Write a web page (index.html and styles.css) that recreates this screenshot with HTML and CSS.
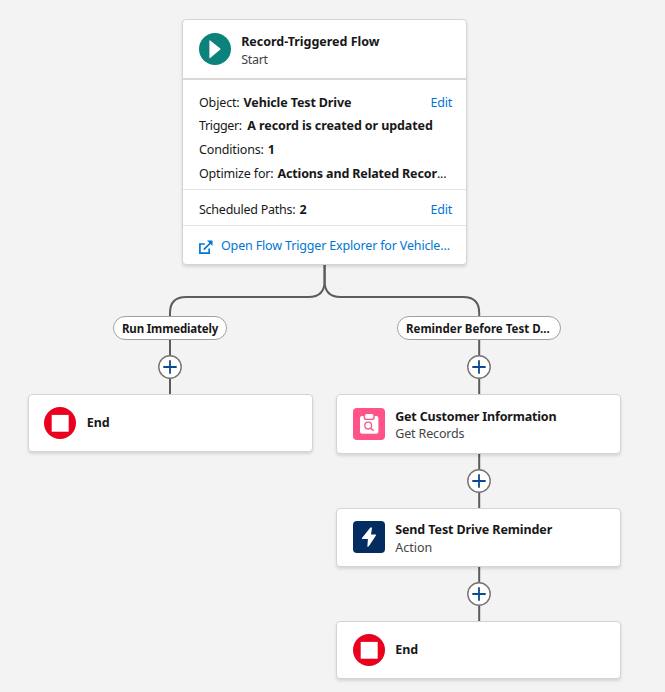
FILE: index.html
```html
<!DOCTYPE html>
<html lang="en">
<head>
<meta charset="utf-8">
<title>Flow Builder</title>
<link rel="stylesheet" href="styles.css">
</head>
<body>
<svg width="0" height="0" class="defs">
  <symbol id="plus" viewBox="0 0 24 24">
    <circle cx="12" cy="12" r="11.2" fill="#fff" stroke="#747474" stroke-width="1.4"/>
    <path d="M12 5.3v13.4M5.3 12h13.4" stroke="#0b4a8c" stroke-width="1.8"/>
  </symbol>
  <symbol id="stop" viewBox="0 0 32 32">
    <circle cx="16" cy="16" r="16" fill="#ea001e"/>
    <rect x="7.7" y="7.9" width="17" height="16.8" fill="#fff"/>
  </symbol>
</svg>
<main class="canvas">
  <svg class="connectors" width="665" height="692" viewBox="0 0 665 692">
    <path d="M324.6 264V281Q324.6 297 308.6 297H186Q170 297 170 313V395"/>
    <path d="M324.6 264V281Q324.6 297 340.6 297H463.2Q479.2 297 479.2 313V622"/>
  </svg>

  <section class="card start">
    <header class="head">
      <svg class="icon" viewBox="0 0 32 32"><circle cx="16" cy="16" r="16" fill="#0b827c"/><path d="M10.4 7.8Q10.4 6.9 11.2 7.5L21.3 15.5Q21.9 16 21.3 16.5L11.2 25Q10.4 25.6 10.4 24.8Z" fill="#fff"/></svg>
      <div class="label"><b class="t-flow">Record-Triggered Flow</b><span class="sub t-start">Start</span></div>
    </header>
    <div class="details">
      <div class="row"><span class="t-key">Object:</span><b class="t-vehicle">Vehicle Test Drive</b><a class="edit">Edit</a></div>
      <div class="row"><span class="t-trigger">Trigger:</span><b class="t-record">A record is created or updated</b></div>
      <div class="row"><span class="t-key">Conditions:</span><b>1</b></div>
      <div class="row"><span class="t-optimize">Optimize for:</span><b class="t-actions">Actions and Related Recor<span class="dots">...</span></b></div>
    </div>
    <div class="row paths"><span class="t-paths">Scheduled Paths:</span><b>2</b><a class="edit">Edit</a></div>
    <div class="explorer">
      <svg class="open" viewBox="0 0 14 14"><path d="M5.8 4H.9V13.2H10.2V8.6M4.8 9.6L11.4 3" fill="none" stroke="#0176d3" stroke-width="1.7"/><path d="M8 .6H13Q13.5 .6 13.5 1.1V6Z" fill="#0176d3"/></svg>
      <a class="t-open">Open Flow Trigger Explorer for Vehicle...</a>
    </div>
  </section>

  <div class="pill run"><b>Run Immediately</b></div>
  <div class="pill reminder"><b>Reminder Before Test D...</b></div>

  <svg class="add add-left"><use href="#plus"/></svg>
  <svg class="add add-first"><use href="#plus"/></svg>
  <svg class="add add-second"><use href="#plus"/></svg>
  <svg class="add add-third"><use href="#plus"/></svg>

  <section class="card node end end-left"><svg class="icon"><use href="#stop"/></svg><div class="label"><b>End</b></div></section>

  <section class="card node get">
    <svg class="icon" viewBox="0 0 32 32"><rect width="32" height="32" rx="4" fill="#ff538a"/><path d="M9 8H10.6V9.5Q10.6 12 13 12H19.4Q21.8 12 21.8 9.5V8H23.4Q25.4 8 25.4 10V23.8Q25.4 25.8 23.4 25.8H9Q7 25.8 7 23.8V10Q7 8 9 8Z" fill="#fff"/><rect x="12" y="6" width="8.4" height="4.7" rx="1.6" fill="#fff"/><circle cx="15.2" cy="17.6" r="3.4" fill="none" stroke="#ff538a" stroke-width="1.3"/><path d="M17.7 20.1L20.6 22.8" stroke="#ff538a" stroke-width="1.5"/></svg>
    <div class="label"><b class="t-get">Get Customer Information</b><span class="sub t-key">Get Records</span></div>
  </section>

  <section class="card node send">
    <svg class="icon" viewBox="0 0 32 32"><rect width="32" height="32" rx="4" fill="#032d60"/><path d="M17.2 6.8Q19 5.4 18.9 7.4L18 13.6H22.4Q23.5 13.6 22.9 14.6L16 25.1Q14.4 26.8 14.4 24.9L14.9 18H9.6Q8.4 18 9 17Z" fill="#fff"/></svg>
    <div class="label"><b class="t-send">Send Test Drive Reminder</b><span class="sub">Action</span></div>
  </section>

  <section class="card node end end-right"><svg class="icon"><use href="#stop"/></svg><div class="label"><b>End</b></div></section>
</main>
</body>
</html>
```

FILE: styles.css
```css
* { box-sizing: border-box; }
body {
  margin: 0;
  background: #f3f3f3;
  color: #181818;
  font: 12.5px/18px "Noto Sans", sans-serif;
}
.defs { position: absolute; }
.canvas { position: relative; width: 665px; height: 692px; overflow: hidden; }
.connectors { position: absolute; left: 0; top: 0; }
.connectors path { fill: none; stroke: #5c5c5c; stroke-width: 2; }

.card {
  position: absolute;
  width: 285px;
  background: #fff;
  border: 1px solid #d4d4d4;
  border-radius: 4px;
  box-shadow: 0 2px 3px rgba(0, 0, 0, .12);
  white-space: nowrap;
}
.icon { width: 32px; height: 32px; flex: none; }
.label { display: flex; flex-direction: column; margin-left: 10.5px; }
.sub { color: #444; }
a { color: #0176d3; }

.start { left: 182px; top: 19px; height: 246px; }
.head { display: flex; height: 60px; padding: 13px 0 0 15.7px; border-bottom: 2px solid #d8d8d8; }
.details { height: 110px; padding: 13.7px 14px 0 16px; border-bottom: 1px solid #e5e5e5; }
.row { display: flex; align-items: flex-start; gap: 4px; height: 23.7px; }
.edit { margin-left: auto; letter-spacing: -.2px; }
.paths { height: 36px; padding: 11px 14px 0 16px; border-bottom: 1px solid #e5e5e5; }
.explorer { display: flex; padding: 11px 0 0 16px; }
.open { width: 14px; height: 14px; margin: 3px 8px 0 0; }

.pill {
  position: absolute;
  top: 316px;
  height: 24px;
  border: 1px solid #a0a0a0;
  border-radius: 12px;
  background: #fff;
  font-size: 11.5px;
  line-height: 24px;
  padding-left: 8px;
  white-space: nowrap;
}
.run { left: 113px; width: 114px; letter-spacing: -.17px; }
.reminder { left: 397px; width: 164px; letter-spacing: 0; }

.add { position: absolute; width: 24px; height: 24px; }
.add-left { left: 158px; top: 355px; }
.add-first { left: 467px; top: 355px; }
.add-second { left: 467px; top: 468.7px; }
.add-third { left: 467px; top: 582px; }

.node { display: flex; padding: 13px 0 0 15.7px; }
.node .label { line-height: 17.5px; }
.end { padding-top: 12px; }
.end .label { padding-top: 6.5px; }
.end-left { left: 27.5px; top: 394px; height: 58px; }
.end-right { left: 336px; top: 621px; height: 58px; }
.get { left: 336px; top: 394px; height: 60px; }
.get .label { line-height: 17px; }
.send { left: 336px; top: 508px; height: 59px; padding-top: 12px; }

.t-flow { letter-spacing: -.02px; }
.t-start { letter-spacing: -.3px; }
.t-key { letter-spacing: -.15px; }
.t-vehicle { letter-spacing: -.12px; }
.t-trigger { letter-spacing: -.35px; margin-right: 1.5px; }
.t-record { letter-spacing: -.1px; }
.t-optimize { letter-spacing: -.17px; }
.t-actions { letter-spacing: -.14px; }
.dots { font-weight: 400; }
.t-paths { letter-spacing: -.25px; }
.t-open { letter-spacing: -.16px; }
.t-get { letter-spacing: -.17px; }
.t-send { letter-spacing: -.1px; }
```
